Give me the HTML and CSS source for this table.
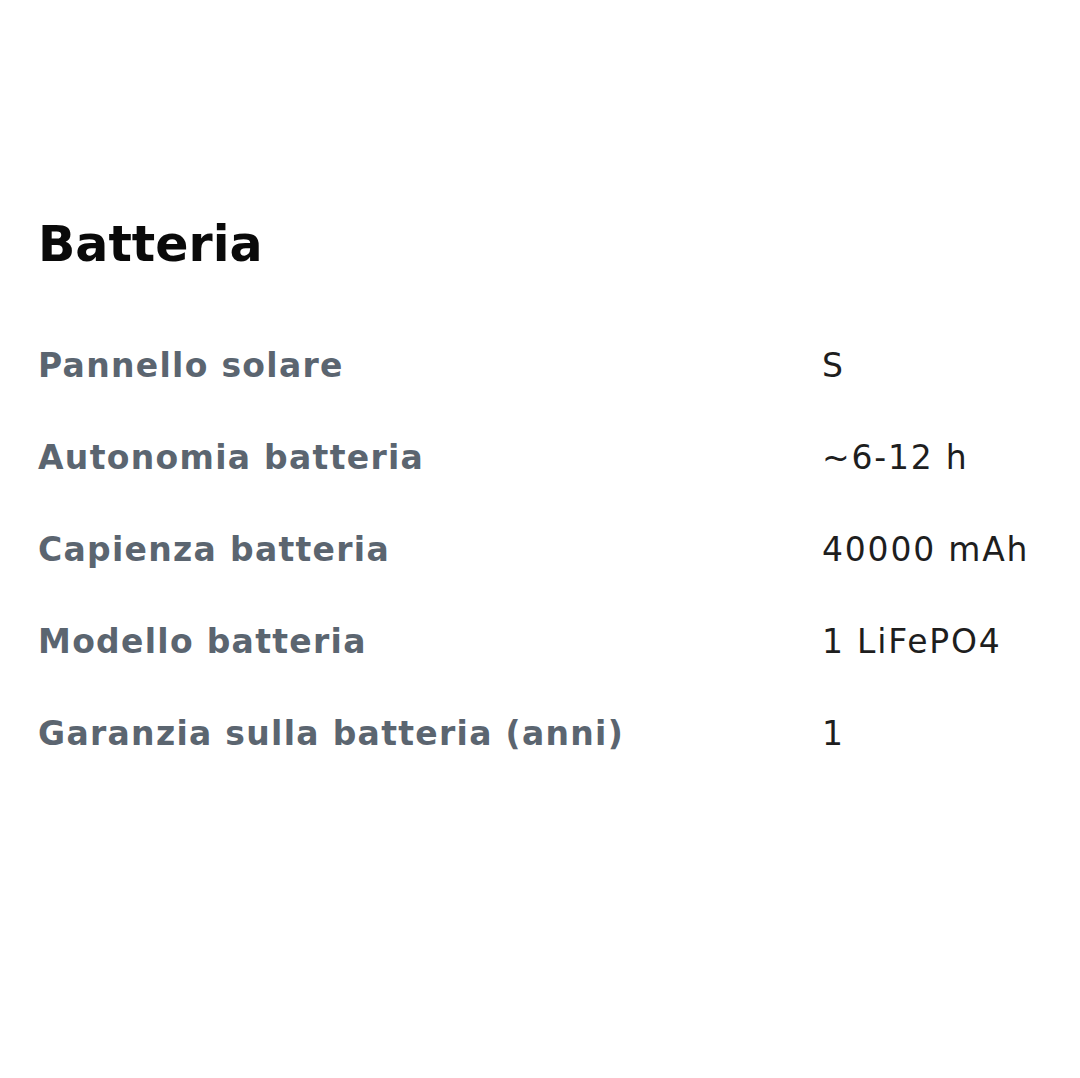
FILE: index.html
```html
<!DOCTYPE html>
<html lang="it">
<head>
<meta charset="utf-8">
<title>Batteria</title>
<link rel="stylesheet" href="styles.css">
</head>
<body>
<section class="specs">
  <h2 class="specs-title">Batteria</h2>
  <dl class="specs-list">
    <div class="spec-row"><dt class="spec-label">Pannello solare</dt><dd class="spec-value">S</dd></div>
    <div class="spec-row"><dt class="spec-label">Autonomia batteria</dt><dd class="spec-value">~6-12 h</dd></div>
    <div class="spec-row"><dt class="spec-label">Capienza batteria</dt><dd class="spec-value">40000 mAh</dd></div>
    <div class="spec-row"><dt class="spec-label">Modello batteria</dt><dd class="spec-value">1 LiFePO4</dd></div>
    <div class="spec-row"><dt class="spec-label">Garanzia sulla batteria (anni)</dt><dd class="spec-value">1</dd></div>
  </dl>
</section>
</body>
</html>
```

FILE: styles.css
```css
html, body {
  margin: 0;
  padding: 0;
  background: #ffffff;
}
body {
  width: 1080px;
  height: 1078px;
  overflow: hidden;
  font-family: "DejaVu Sans", "Open Sans", "Liberation Sans", sans-serif;
}
.specs {
  padding: 212px 0 0 38px;
}
.specs-title {
  margin: 0;
  font-size: 49px;
  line-height: 66px;
  font-weight: 700;
  color: #0a0a0a;
}
.specs-list {
  margin: 53px 0 0 0;
  padding: 0;
}
.spec-row {
  display: grid;
  grid-template-columns: 784px 1fr;
  height: 92px;
  align-items: center;
}
.spec-row:first-child {
  margin-top: -12px;
}
.spec-label {
  margin: 0;
  font-size: 33px;
  font-weight: 700;
  letter-spacing: 1.3px;
  color: #5b6570;
  white-space: nowrap;
}
.spec-value {
  margin: 0;
  font-size: 33px;
  font-weight: 400;
  letter-spacing: 1.8px;
  color: #1e1e1e;
  white-space: nowrap;
}
```
